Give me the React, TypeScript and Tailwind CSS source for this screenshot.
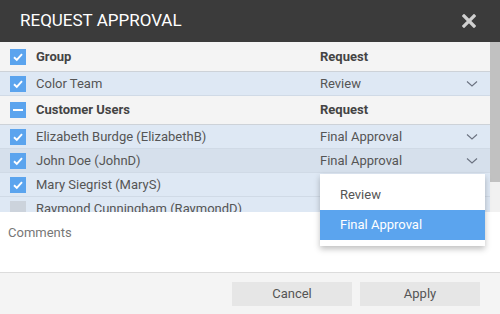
import React from "react";

const Check = ({ state }: { state: "on" | "mixed" | "off" }) => {
  if (state === "off") return <div className="w-4 h-4 bg-[#ccd3dc] shrink-0" />;
  return (
    <div className="w-4 h-4 bg-[#5ba4ee] shrink-0 flex items-center justify-center">
      {state === "on" ? (
        <svg width="12" height="12" viewBox="0 0 12 12">
          <path d="M2 6.3 L4.8 9 L10 3.2" fill="none" stroke="#fff" strokeWidth="1.9" />
        </svg>
      ) : (
        <div className="w-[10px] h-[2px] bg-white" />
      )}
    </div>
  );
};

const Chevron = () => (
  <svg width="12" height="8" viewBox="0 0 12 8" className="absolute right-[12px]">
    <path d="M1 1.5 L6 6 L11 1.5" fill="none" stroke="#6b7280" strokeWidth="1.1" />
  </svg>
);

const HeaderRow = ({ label, state, h }: { label: string; state: "on" | "mixed"; h: string }) => (
  <div className={`flex items-center bg-[#f4f4f4] border-b border-[#cdd2d8] shrink-0 ${h}`}>
    <div className="w-[36px] pl-[10px] flex items-center">
      <Check state={state} />
    </div>
    <div className="flex-1 font-bold text-[#444]">{label}</div>
    <div className="w-[170px] font-bold text-[#444]">Request</div>
  </div>
);

const DataRow = ({
  label,
  value,
  state = "on",
  bg = "bg-[#dee8f4]",
}: {
  label: string;
  value?: string;
  state?: "on" | "off";
  bg?: string;
}) => (
  <div className={`relative flex items-center h-[24px] border-b border-[#d0dae6] ${bg} shrink-0`}>
    <div className="w-[36px] pl-[10px] flex items-center">
      <Check state={state} />
    </div>
    <div className="flex-1 text-[#555] whitespace-nowrap">{label}</div>
    <div className="w-[170px] text-[#555]">{value}</div>
    {value && <Chevron />}
  </div>
);

export default function App() {
  return (
    <div
      className="w-[500px] h-[314px] flex flex-col bg-white text-[13px] relative overflow-hidden"
      style={{ fontFamily: "Roboto, 'Liberation Sans', sans-serif" }}
    >
      <div className="h-[42px] bg-[#3b3b3b] flex items-center justify-between pl-[20px] pr-[24px] shrink-0">
        <div className="text-white text-[17px]">REQUEST APPROVAL</div>
        <svg width="14" height="14" viewBox="0 0 14 14">
          <path d="M2 2 L12 12 M12 2 L2 12" stroke="#d0d0d0" strokeWidth="3.2" strokeLinecap="square" />
        </svg>
      </div>
      <div className="h-[170px] flex shrink-0 overflow-hidden">
        <div className="flex-1 flex flex-col overflow-hidden">
          <HeaderRow label="Group" state="on" h="h-[30px]" />
          <DataRow label="Color Team" value="Review" />
          <HeaderRow label="Customer Users" state="mixed" h="h-[29px]" />
          <DataRow label="Elizabeth Burdge (ElizabethB)" value="Final Approval" />
          <DataRow label="John Doe (JohnD)" value="Final Approval" bg="bg-[#d6e0ec]" />
          <DataRow label="Mary Siegrist (MaryS)" />
          <DataRow label="Raymond Cunningham (RaymondD)" state="off" />
        </div>
        <div className="w-[10px] bg-[#f1f1f1] flex flex-col">
          <div className="h-[140px] bg-[#c1c1c1]" />
        </div>
      </div>
      <div className="flex-1 border-b border-[#dcdcdc] px-[8px] pt-[11px] text-[#777]">Comments</div>
      <div className="h-[41px] bg-[#f4f4f4] flex items-center justify-end gap-[8px] pr-[20px] shrink-0">
        <div className="w-[120px] h-[24px] bg-[#e6e6e6] flex items-center justify-center text-[#555]">Cancel</div>
        <div className="w-[120px] h-[24px] bg-[#e6e6e6] flex items-center justify-center text-[#555]">Apply</div>
      </div>
      <div className="absolute left-[320px] top-[174px] w-[165px] bg-white py-[6px] shadow-[0_3px_6px_rgba(0,0,0,0.25)]">
        <div className="h-[30px] flex items-center pl-[20px] text-[#555]">Review</div>
        <div className="h-[30px] flex items-center pl-[20px] bg-[#5ba4ee] text-white">Final Approval</div>
      </div>
    </div>
  );
}
